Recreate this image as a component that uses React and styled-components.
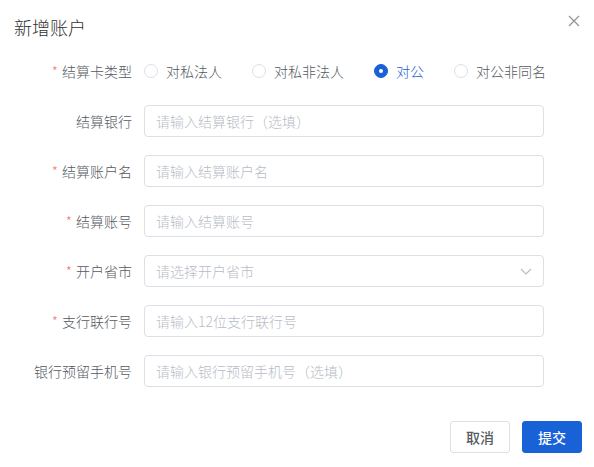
import React, { useState } from "react";
import styled, { createGlobalStyle } from "styled-components";

const GlobalStyle = createGlobalStyle`
    body {
        margin: 0;
        background: #fff;
        font-family: "Noto Sans CJK SC", "Noto Sans", sans-serif;
        font-weight: 300;
    }
    * {
        box-sizing: border-box;
    }
`;

const BLUE = "#1961d7";

const Dialog = styled.div`
    width: 594px;
    height: 467px;
    background: #fff;
    position: relative;
`;

const Header = styled.div`
    height: 55px;
    padding: 14px 14px 0;
`;

const Title = styled.div`
    font-size: 18px;
    line-height: 26px;
    color: #303133;
`;

const Close = styled.button`
    position: absolute;
    top: 15px;
    right: 14px;
    width: 12px;
    height: 12px;
    padding: 0;
    border: 0;
    background: none;
    cursor: pointer;
    display: flex;
`;

const Form = styled.div`
    display: flex;
    flex-direction: column;
    gap: 18px;
`;

const Row = styled.div`
    display: flex;
    align-items: center;
    height: 32px;
`;

const Label = styled.label`
    width: 144px;
    padding-right: 12px;
    text-align: right;
    font-size: 14px;
    color: #555a61;
    &::before {
        content: ${p => (p.$required ? '"*"' : "none")};
        color: #f47b7b;
        margin-right: 4px;
    }
`;

const Control = styled.div`
    width: 400px;
    position: relative;
`;

const Input = styled.input`
    width: 100%;
    height: 32px;
    border: 1px solid #dcdfe6;
    border-radius: 4px;
    padding: 0 11px;
    font-size: 14px;
    font-family: inherit;
    font-weight: 300;
    color: #606266;
    outline: none;
    &::placeholder {
        color: #b8bcc5;
    }
`;

const Arrow = styled.svg`
    position: absolute;
    right: 12px;
    top: 11px;
    pointer-events: none;
`;

const RadioGroup = styled.div`
    display: flex;
    align-items: center;
    gap: 30px;
`;

const RadioItem = styled.label`
    display: flex;
    align-items: center;
    gap: 8px;
    cursor: pointer;
    font-size: 14px;
    color: ${p => (p.$checked ? BLUE : "#555a61")};
`;

const Dot = styled.span`
    width: 14px;
    height: 14px;
    border-radius: 50%;
    border: 1px solid ${p => (p.$checked ? BLUE : "#dcdfe6")};
    background: ${p => (p.$checked ? BLUE : "#fff")};
    display: flex;
    align-items: center;
    justify-content: center;
    &::after {
        content: "";
        width: 4px;
        height: 4px;
        border-radius: 50%;
        background: #fff;
        display: ${p => (p.$checked ? "block" : "none")};
    }
`;

const Footer = styled.div`
    display: flex;
    justify-content: flex-end;
    gap: 12px;
    padding: 34px 12px 0;
`;

const Button = styled.button`
    width: 60px;
    height: 32px;
    border-radius: 3px;
    font-size: 14px;
    font-weight: 500;
    font-family: inherit;
    cursor: pointer;
    border: 1px solid ${p => (p.$primary ? BLUE : "#dcdfe6")};
    background: ${p => (p.$primary ? BLUE : "#fff")};
    color: ${p => (p.$primary ? "#fff" : "#555a61")};
`;

const cardTypes = ["对私法人", "对私非法人", "对公", "对公非同名"];

const fields = [
    { label: "结算银行", placeholder: "请输入结算银行（选填）" },
    { label: "结算账户名", placeholder: "请输入结算账户名", required: true },
    { label: "结算账号", placeholder: "请输入结算账号", required: true },
    { label: "开户省市", placeholder: "请选择开户省市", required: true, select: true },
    { label: "支行联行号", placeholder: "请输入12位支行联行号", required: true },
    { label: "银行预留手机号", placeholder: "请输入银行预留手机号（选填）" }
];

export default function App() {
    const [type, setType] = useState("对公");

    return (
        <>
            <GlobalStyle />
            <Dialog>
                <Header>
                    <Title>新增账户</Title>
                </Header>
                <Close aria-label="关闭">
                    <svg width="12" height="12" viewBox="0 0 12 12">
                        <path d="M1 1L11 11M11 1L1 11" stroke="#909399" strokeWidth="1.2" />
                    </svg>
                </Close>
                <Form>
                    <Row>
                        <Label $required>结算卡类型</Label>
                        <RadioGroup>
                            {cardTypes.map(t => (
                                <RadioItem key={t} $checked={type === t} onClick={() => setType(t)}>
                                    <Dot $checked={type === t} />
                                    {t}
                                </RadioItem>
                            ))}
                        </RadioGroup>
                    </Row>
                    {fields.map(f => (
                        <Row key={f.label}>
                            <Label $required={f.required}>{f.label}</Label>
                            <Control>
                                <Input placeholder={f.placeholder} readOnly={f.select} />
                                {f.select && (
                                    <Arrow width="12" height="10" viewBox="0 0 12 10">
                                        <path d="M1 3L6 8L11 3" fill="none" stroke="#b8bcc5" strokeWidth="1.1" />
                                    </Arrow>
                                )}
                            </Control>
                        </Row>
                    ))}
                </Form>
                <Footer>
                    <Button>取消</Button>
                    <Button $primary>提交</Button>
                </Footer>
            </Dialog>
        </>
    );
}
